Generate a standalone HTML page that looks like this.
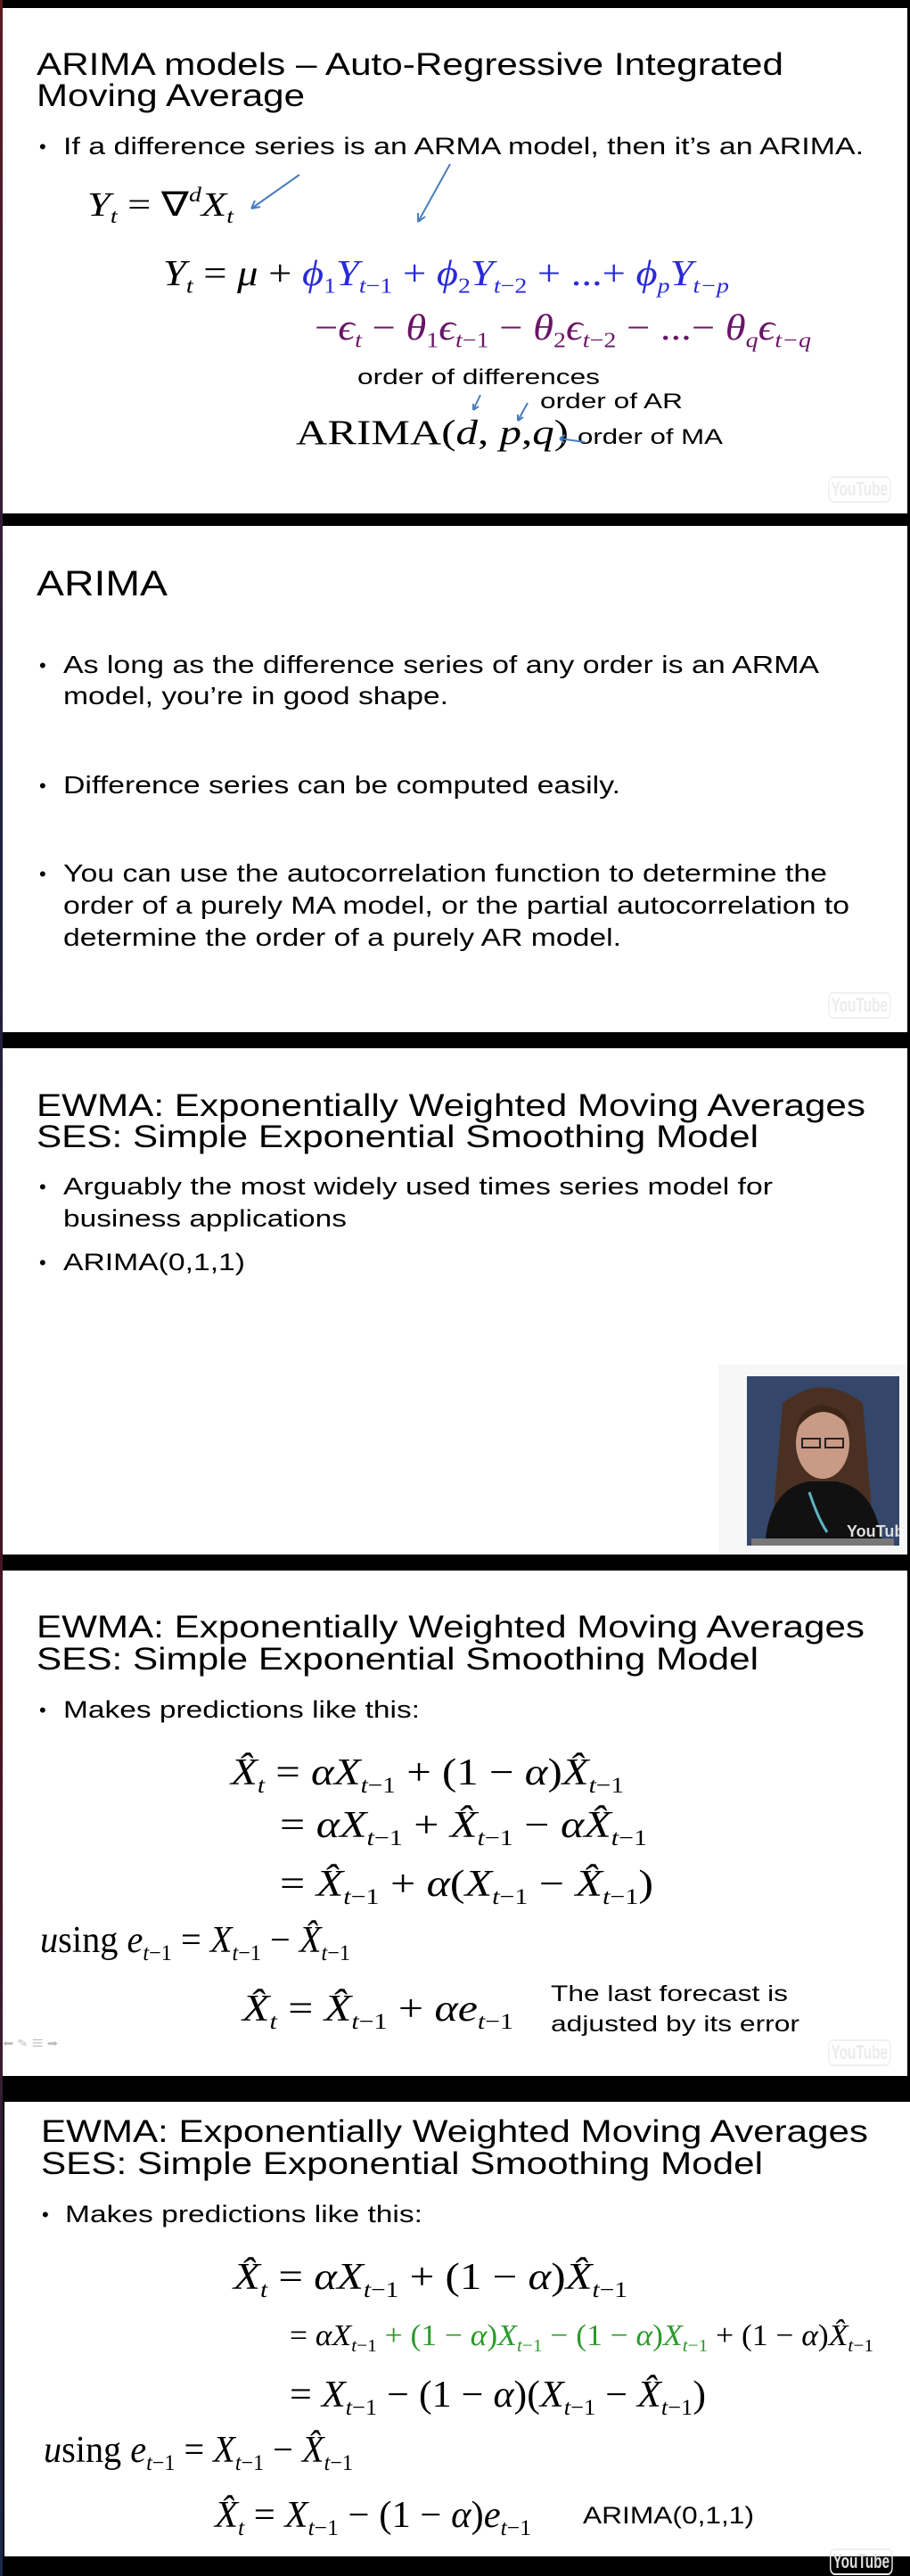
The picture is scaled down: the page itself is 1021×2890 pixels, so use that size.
<!DOCTYPE html>
<html><head><meta charset="utf-8">
<style>
html,body{margin:0;padding:0}
body{width:1021px;height:2890px;background:#000;position:relative;overflow:hidden;font-family:"Liberation Sans",Arial,sans-serif;color:#000}
.s{position:absolute;background:#fff}
.strip{position:absolute;left:0;width:3px;background:linear-gradient(#5a1a22,#1a2240,#4a1420,#1b2a4a)}
.f{position:absolute;white-space:nowrap;line-height:1;transform-origin:0 0}
.m{font-family:"Liberation Serif","Times New Roman",serif;font-style:italic}
.m .r{font-style:normal}
.m sub{font-size:0.6em;vertical-align:-0.35em;line-height:0}
.m sup{font-size:0.6em;vertical-align:0.7em;line-height:0}
.dot{position:absolute;font-size:22px;line-height:1}
.yt{position:absolute;font-family:"Liberation Sans",sans-serif;font-size:22px;color:#ececec;border:2px solid #f0f0f0;border-radius:8px;padding:0 3px;transform:scaleX(0.7);transform-origin:0 0;white-space:nowrap;font-weight:bold}
.bl{color:#2a2ad8}.pu{color:#6a1468}.gr{color:#2b9a2b}
</style></head><body>

<div class="strip" style="top:0;height:2890px"></div>

<!-- Slide 1 -->
<div class="s" style="left:3px;top:9px;width:1015px;height:567px"></div>
<div class="f" style="left:41px;top:55px;font-size:35px;--w:838px">ARIMA models – Auto-Regressive Integrated</div>
<div class="f" style="left:41px;top:90px;font-size:35px;--w:301px">Moving Average</div>
<div class="dot" style="left:44px;top:154px">•</div>
<div class="f" style="left:71px;top:151px;font-size:27px;--w:898px">If a difference series is an ARMA model, then it’s an ARIMA.</div>
<div class="f m" style="left:98px;top:211px;font-size:38px;--w:164px">Y<sub>t</sub> <span class="r">=</span> <span class="r">∇</span><sup>d</sup>X<sub>t</sub></div>
<div class="f m" style="left:183px;top:286px;font-size:41px;--w:635px">Y<sub>t</sub> <span class="r">=</span> μ <span class="r">+</span> <span class="bl">ϕ<sub class="r">1</sub>Y<sub>t<span class="r">−1</span></sub> <span class="r">+</span> ϕ<sub class="r">2</sub>Y<sub>t<span class="r">−2</span></sub> <span class="r">+ ...+</span> ϕ<sub>p</sub>Y<sub>t−p</sub></span></div>
<div class="f m pu" style="left:353px;top:347px;font-size:41px;--w:557px"><span class="r">−</span>ϵ<sub>t</sub> <span class="r">−</span> θ<sub class="r">1</sub>ϵ<sub>t<span class="r">−1</span></sub> <span class="r">−</span> θ<sub class="r">2</sub>ϵ<sub>t<span class="r">−2</span></sub> <span class="r">− ...−</span> θ<sub>q</sub>ϵ<sub>t−q</sub></div>
<div class="f" style="left:401px;top:412px;font-size:24px;--w:272px">order of differences</div>
<div class="f" style="left:606px;top:439px;font-size:24px;--w:160px">order of AR</div>
<div class="f m" style="left:332px;top:466px;font-size:39px;--w:306px"><span class="r">ARIMA(</span>d<span class="r">, </span>p<span class="r">,</span>q<span class="r">)</span></div>
<div class="f" style="left:648px;top:479px;font-size:24px;--w:163px">order of MA</div>
<svg style="position:absolute;left:0;top:0" width="1021" height="600">
<g stroke="#4a7ebb" stroke-width="2" fill="none">
<path d="M336 196 L282 234 M282 234 l4 -9 M282 234 l10 -2"/>
<path d="M505 184 L469 249 M469 249 l0 -10 M469 249 l8 -6"/>
<path d="M539 443 L531 460 M531 460 l0 -7 M531 460 l6 -4"/>
<path d="M592 452 L581 472 M581 472 l0 -7 M581 472 l6 -4"/>
<path d="M656 496 L628 492 M628 492 l6 -4 M628 492 l5 5"/>
</g></svg>
<div class="yt" style="left:929px;top:534px">YouTube</div>

<!-- Slide 2 -->
<div class="s" style="left:3px;top:590px;width:1015px;height:568px"></div>
<div class="f" style="left:41px;top:635px;font-size:40px;--w:147px">ARIMA</div>
<div class="dot" style="left:44px;top:736px">•</div>
<div class="f" style="left:71px;top:732px;font-size:28px;--w:848px">As long as the difference series of any order is an ARMA</div>
<div class="f" style="left:71px;top:767px;font-size:28px;--w:432px">model, you’re in good shape.</div>
<div class="dot" style="left:44px;top:871px">•</div>
<div class="f" style="left:71px;top:867px;font-size:28px;--w:625px">Difference series can be computed easily.</div>
<div class="dot" style="left:44px;top:970px">•</div>
<div class="f" style="left:71px;top:966px;font-size:28px;--w:857px">You can use the autocorrelation function to determine the</div>
<div class="f" style="left:71px;top:1002px;font-size:28px;--w:882px">order of a purely MA model, or the partial autocorrelation to</div>
<div class="f" style="left:71px;top:1038px;font-size:28px;--w:626px">determine the order of a purely AR model.</div>
<div class="yt" style="left:929px;top:1113px">YouTube</div>

<!-- Slide 3 -->
<div class="s" style="left:3px;top:1176px;width:1015px;height:568px"></div>
<div class="f" style="left:41px;top:1223px;font-size:35px;--w:930px">EWMA: Exponentially Weighted Moving Averages</div>
<div class="f" style="left:41px;top:1258px;font-size:35px;--w:810px">SES: Simple Exponential Smoothing Model</div>
<div class="dot" style="left:44px;top:1321px">•</div>
<div class="f" style="left:71px;top:1318px;font-size:27px;--w:796px">Arguably the most widely used times series model for</div>
<div class="f" style="left:71px;top:1354px;font-size:27px;--w:318px">business applications</div>
<div class="dot" style="left:44px;top:1406px">•</div>
<div class="f" style="left:71px;top:1403px;font-size:27px;--w:204px">ARIMA(0,1,1)</div>
<div style="position:absolute;left:806px;top:1531px;width:212px;height:213px;background:#f7f7f7"></div>
<svg style="position:absolute;left:838px;top:1544px" width="171" height="190" viewBox="0 0 171 190">
<rect width="171" height="190" fill="#34476b"/>
<path d="M40 30 Q85 -5 130 30 L140 150 L30 150 Z" fill="#4a3022"/>
<ellipse cx="85" cy="75" rx="30" ry="40" fill="#c99a86"/>
<path d="M55 60 Q85 20 118 60 Q110 35 85 32 Q60 35 55 60Z" fill="#3d2518"/>
<rect x="62" y="70" width="20" height="10" fill="none" stroke="#222" stroke-width="2"/>
<rect x="88" y="70" width="20" height="10" fill="none" stroke="#222" stroke-width="2"/>
<path d="M20 190 Q25 125 70 118 L100 118 Q145 125 152 190 Z" fill="#111"/>
<path d="M70 130 Q80 160 90 175" stroke="#5fb3c0" stroke-width="3" fill="none"/>
<rect x="5" y="182" width="160" height="8" fill="#777"/>
<text x="112" y="180" font-family="Liberation Sans" font-size="18" font-weight="bold" fill="#ddd">YouTube</text>
</svg>
<div class="yt" style="left:929px;top:1113px;display:none"></div>

<!-- Slide 4 -->
<div class="s" style="left:3px;top:1762px;width:1015px;height:567px"></div>
<div class="f" style="left:41px;top:1808px;font-size:35px;--w:929px">EWMA: Exponentially Weighted Moving Averages</div>
<div class="f" style="left:41px;top:1844px;font-size:35px;--w:810px">SES: Simple Exponential Smoothing Model</div>
<div class="dot" style="left:44px;top:1908px">•</div>
<div class="f" style="left:71px;top:1905px;font-size:27px;--w:400px">Makes predictions like this:</div>
<div class="f m" style="left:259px;top:1968px;font-size:42px;--w:441px">X̂<sub>t</sub> <span class="r">=</span> αX<sub>t<span class="r">−1</span></sub> <span class="r">+ (1 −</span> α<span class="r">)</span>X̂<sub>t<span class="r">−1</span></sub></div>
<div class="f m" style="left:314px;top:2027px;font-size:42px;--w:412px"><span class="r">=</span> αX<sub>t<span class="r">−1</span></sub> <span class="r">+</span> X̂<sub>t<span class="r">−1</span></sub> <span class="r">−</span> αX̂<sub>t<span class="r">−1</span></sub></div>
<div class="f m" style="left:314px;top:2093px;font-size:42px;--w:419px"><span class="r">=</span> X̂<sub>t<span class="r">−1</span></sub> <span class="r">+</span> α<span class="r">(</span>X<sub>t<span class="r">−1</span></sub> <span class="r">−</span> X̂<sub>t<span class="r">−1</span></sub><span class="r">)</span></div>
<div class="f m" style="left:45px;top:2156px;font-size:42px;--w:348px">u<span class="r">sing</span> e<sub>t<span class="r">−1</span></sub> <span class="r">=</span> X<sub>t<span class="r">−1</span></sub> <span class="r">−</span> X̂<sub>t<span class="r">−1</span></sub></div>
<div class="f m" style="left:272px;top:2233px;font-size:42px;--w:304px">X̂<sub>t</sub> <span class="r">=</span> X̂<sub>t<span class="r">−1</span></sub> <span class="r">+</span> αe<sub>t<span class="r">−1</span></sub></div>
<div class="f" style="left:618px;top:2225px;font-size:25px;--w:266px">The last forecast is</div>
<div class="f" style="left:618px;top:2259px;font-size:25px;--w:279px">adjusted by its error</div>
<div class="f" style="left:3px;top:2288px;font-size:11px;color:#bbb;--w:62px">⬅ ✎ ☰ ➡</div>
<div class="yt" style="left:929px;top:2288px">YouTube</div>

<!-- Slide 5 -->
<div class="s" style="left:5px;top:2358px;width:1016px;height:510px"></div>
<div class="f" style="left:46px;top:2374px;font-size:35px;--w:928px">EWMA: Exponentially Weighted Moving Averages</div>
<div class="f" style="left:46px;top:2410px;font-size:35px;--w:810px">SES: Simple Exponential Smoothing Model</div>
<div class="dot" style="left:47px;top:2474px">•</div>
<div class="f" style="left:73px;top:2471px;font-size:27px;--w:401px">Makes predictions like this:</div>
<div class="f m" style="left:262px;top:2534px;font-size:42px;--w:442px">X̂<sub>t</sub> <span class="r">=</span> αX<sub>t<span class="r">−1</span></sub> <span class="r">+ (1 −</span> α<span class="r">)</span>X̂<sub>t<span class="r">−1</span></sub></div>
<div class="f m" style="left:325px;top:2604px;font-size:34px;--w:655px"><span class="r">=</span> αX<sub>t<span class="r">−1</span></sub> <span class="gr"><span class="r">+ (1 −</span> α<span class="r">)</span>X<sub>t<span class="r">−1</span></sub> <span class="r">− (1 −</span> α<span class="r">)</span>X<sub>t<span class="r">−1</span></sub></span> <span class="r">+ (1 −</span> α<span class="r">)</span>X̂<sub>t<span class="r">−1</span></sub></div>
<div class="f m" style="left:325px;top:2666px;font-size:42px;--w:467px"><span class="r">=</span> X<sub>t<span class="r">−1</span></sub> <span class="r">− (1 −</span> α<span class="r">)(</span>X<sub>t<span class="r">−1</span></sub> <span class="r">−</span> X̂<sub>t<span class="r">−1</span></sub><span class="r">)</span></div>
<div class="f m" style="left:49px;top:2728px;font-size:42px;--w:347px">u<span class="r">sing</span> e<sub>t<span class="r">−1</span></sub> <span class="r">=</span> X<sub>t<span class="r">−1</span></sub> <span class="r">−</span> X̂<sub>t<span class="r">−1</span></sub></div>
<div class="f m" style="left:241px;top:2801px;font-size:42px;--w:355px">X̂<sub>t</sub> <span class="r">=</span> X<sub>t<span class="r">−1</span></sub> <span class="r">− (1 −</span> α<span class="r">)</span>e<sub>t<span class="r">−1</span></sub></div>
<div class="f" style="left:654px;top:2809px;font-size:27px;--w:192px">ARIMA(0,1,1)</div>
<div class="yt" style="left:931px;top:2859px;color:#ddd">YouTube</div>

<script>
document.querySelectorAll('.f').forEach(function(e){
  var w=parseFloat(e.style.getPropertyValue('--w'));
  var r=e.getBoundingClientRect().width;
  if(w&&r) e.style.transform='scaleX('+(w/r)+')';
});
</script>
</body></html>
